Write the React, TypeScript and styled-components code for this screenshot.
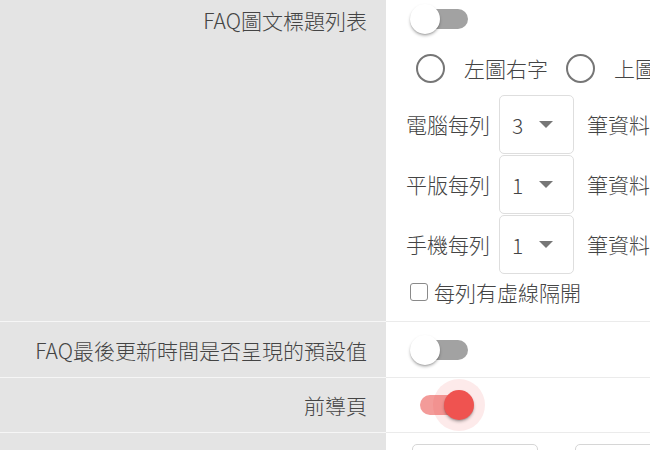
import React from 'react';
import styled, { createGlobalStyle } from 'styled-components';

const GlobalStyle = createGlobalStyle`
  html, body {
    margin: 0;
    padding: 0;
    background: #ffffff;
    overflow: hidden;
  }
  body {
    font-family: 'Noto Sans CJK TC', 'Noto Sans', sans-serif;
    font-weight: 300;
    color: #444;
  }
`;

interface ISelectRow {
  label: string;
  value: string;
}

const selectRows: ISelectRow[] = [
  { label: '電腦每列', value: '3' },
  { label: '平版每列', value: '1' },
  { label: '手機每列', value: '1' },
];

export default function App() {
  return (
    <>
      <GlobalStyle />
      <Table>
        <Row>
          <LabelCell align="top">FAQ圖文標題列表</LabelCell>
          <ValueCell>
            <SwitchLine>
              <Switch checked={false} />
            </SwitchLine>
            <RadioLine>
              <RadioOption>
                <RadioCircle />
                <OptionText>左圖右字</OptionText>
              </RadioOption>
              <RadioOption>
                <RadioCircle />
                <OptionText>上圖下字</OptionText>
              </RadioOption>
            </RadioLine>
            <SelectBlock>
              {selectRows.map((row) => (
                <SelectRow key={row.label}>
                  <OptionText>{row.label}</OptionText>
                  <SelectBox>
                    <SelectValue>{row.value}</SelectValue>
                    <Caret />
                  </SelectBox>
                  <OptionText>筆資料</OptionText>
                </SelectRow>
              ))}
            </SelectBlock>
            <CheckLine>
              <CheckBox />
              <OptionText>每列有虛線隔開</OptionText>
            </CheckLine>
          </ValueCell>
        </Row>
        <Row height={56}>
          <LabelCell>FAQ最後更新時間是否呈現的預設值</LabelCell>
          <ValueCell centered>
            <Switch checked={false} />
          </ValueCell>
        </Row>
        <Row height={55}>
          <LabelCell>前導頁</LabelCell>
          <ValueCell centered>
            <Switch checked />
          </ValueCell>
        </Row>
        <Row height={60}>
          <LabelCell />
          <ValueCell>
            <InputLine>
              <TextInput width={126} />
              <TextInput width={100} />
            </InputLine>
          </ValueCell>
        </Row>
      </Table>
    </>
  );
}

function Switch({ checked }: { checked: boolean }) {
  return (
    <SwitchRoot>
      <SwitchTrack checked={checked} />
      <SwitchThumb checked={checked} />
    </SwitchRoot>
  );
}

const Table = styled.div`
  display: flex;
  flex-direction: column;
  width: 650px;
`;

const Row = styled.div<{ height?: number }>`
  display: flex;
  min-height: ${({ height }) => (height ? `${height}px` : 'auto')};
`;

const LabelCell = styled.div<{ align?: 'top' }>`
  box-sizing: border-box;
  flex: 0 0 386px;
  display: flex;
  justify-content: flex-end;
  align-items: ${({ align }) => (align === 'top' ? 'flex-start' : 'center')};
  padding: ${({ align }) => (align === 'top' ? '6px 19px 0 0' : '0 19px 0 0')};
  background: #e4e4e4;
  border-bottom: 1px solid #f6f6f6;
  font-size: 21px;
  line-height: 28px;
  color: #444;
  white-space: nowrap;
`;

const ValueCell = styled.div<{ centered?: boolean }>`
  box-sizing: border-box;
  flex: 1;
  display: flex;
  flex-direction: column;
  justify-content: ${({ centered }) => (centered ? 'center' : 'flex-start')};
  padding: ${({ centered }) => (centered ? '0 0 0 20px' : '0 0 17px 20px')};
  border-bottom: 1px solid #ebebeb;
  overflow: hidden;
`;

const SwitchLine = styled.div`
  display: flex;
  align-items: center;
  height: 38px;
`;

const SwitchRoot = styled.div`
  position: relative;
  flex: 0 0 auto;
  width: 60px;
  height: 30px;
  margin-left: 4px;
`;

const SwitchTrack = styled.div<{ checked: boolean }>`
  position: absolute;
  left: 10px;
  top: 5px;
  width: 48px;
  height: 20px;
  border-radius: 10px;
  background: ${({ checked }) => (checked ? '#f39b99' : '#a2a2a2')};
`;

const SwitchThumb = styled.div<{ checked: boolean }>`
  position: absolute;
  top: 0;
  left: ${({ checked }) => (checked ? '34px' : '0')};
  width: 30px;
  height: 30px;
  border-radius: 50%;
  background: ${({ checked }) => (checked ? '#ef5350' : '#ffffff')};
  box-shadow: 0 2px 3px rgba(0, 0, 0, 0.25), 0 1px 1px rgba(0, 0, 0, 0.12),
    ${({ checked }) => (checked ? '0 0 0 11px rgba(239, 83, 80, 0.12)' : '0 0 0 0 transparent')};
`;

const RadioLine = styled.div`
  display: flex;
  align-items: center;
  height: 40px;
  margin-top: 10px;
  white-space: nowrap;
`;

const RadioOption = styled.div`
  display: flex;
  flex: 0 0 auto;
  align-items: center;
  gap: 19px;
  margin-left: 10px;
  margin-right: 8px;
`;

const RadioCircle = styled.span`
  box-sizing: border-box;
  flex: 0 0 auto;
  width: 29px;
  height: 29px;
  border: 2.5px solid #767676;
  border-radius: 50%;
`;

const OptionText = styled.span`
  flex: 0 0 auto;
  font-size: 21px;
  line-height: 28px;
  color: #444;
  white-space: nowrap;
`;

const SelectBlock = styled.div`
  display: flex;
  flex-direction: column;
  margin-top: 7px;
`;

const SelectRow = styled.div`
  display: flex;
  align-items: flex-start;
  height: 60px;

  & > span {
    line-height: 59px;
  }
`;

const SelectBox = styled.div`
  box-sizing: border-box;
  display: flex;
  flex: 0 0 auto;
  align-items: center;
  width: 75px;
  height: 59px;
  margin: 0 13px 0 9px;
  padding: 0 0 0 12px;
  border: 1px solid #dedede;
  border-radius: 5px;
`;

const SelectValue = styled.span`
  width: 27px;
  font-size: 21px;
  color: #444;
`;

const Caret = styled.span`
  width: 0;
  height: 0;
  border-left: 7px solid transparent;
  border-right: 7px solid transparent;
  border-top: 7px solid #767676;
`;

const CheckLine = styled.div`
  display: flex;
  align-items: center;
  gap: 6px;
  height: 24px;
  margin-top: 5px;
  padding-left: 4px;
`;

const CheckBox = styled.span`
  box-sizing: border-box;
  flex: 0 0 auto;
  width: 18px;
  height: 18px;
  border: 1.5px solid #8a8a8a;
  border-radius: 3px;
`;

const InputLine = styled.div`
  display: flex;
  gap: 37px;
  padding: 11px 0 0 6px;
`;

const TextInput = styled.div<{ width: number }>`
  box-sizing: border-box;
  flex: 0 0 auto;
  width: ${({ width }) => `${width}px`};
  height: 40px;
  border: 1px solid #d6d6d6;
  border-radius: 5px;
`;
